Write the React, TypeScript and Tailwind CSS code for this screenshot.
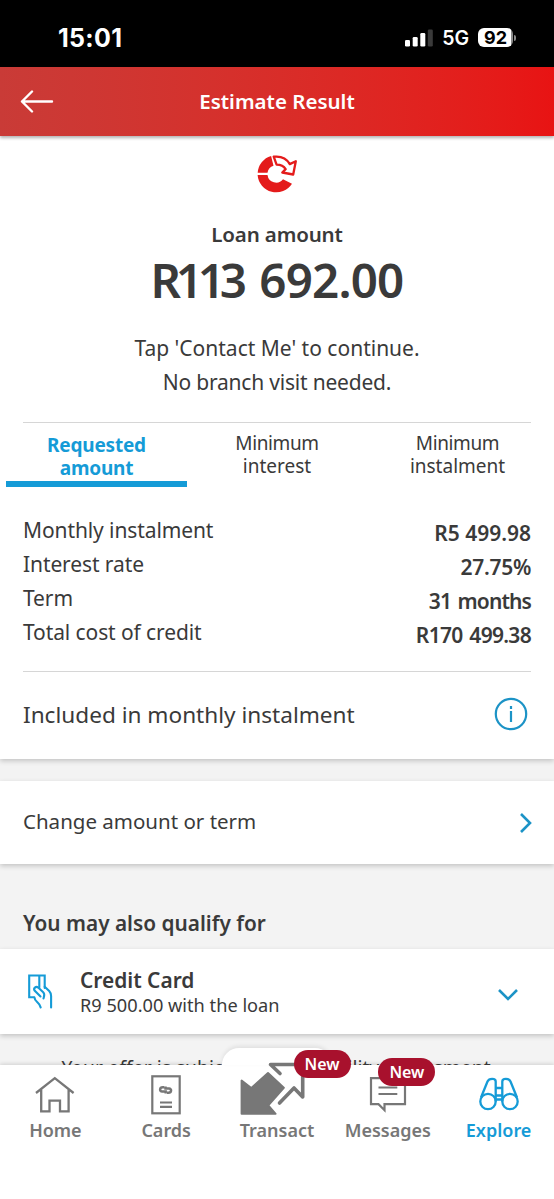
const details = [
  { label: 'Monthly instalment', value: 'R5 499.98', spacing: '' },
  { label: 'Interest rate', value: '27.75%', spacing: 'tracking-[-0.3px]' },
  { label: 'Term', value: '31 months', spacing: 'tracking-[-0.9px] [word-spacing:2px]' },
  { label: 'Total cost of credit', value: 'R170 499.38', spacing: 'tracking-[-0.7px] [word-spacing:2px]' },
];

const StatusBar = () => (
  <div className="flex h-[67px] items-center justify-between bg-black pr-[38px] pl-[58px] pt-2 font-['Inter',sans-serif] text-white">
    <span className="text-[25px] font-bold leading-8 tracking-[0.3px]">15:01</span>
    <div className="flex items-center">
      <svg width="28" height="18" viewBox="0 0 28 18" fill="white">
        <rect x="0" y="11" width="5" height="6.500" rx="1.3" />
        <rect x="7.7" y="8" width="5" height="9.500" rx="1.3" />
        <rect x="15.3" y="4" width="5" height="13.500" rx="1.3" />
        <rect x="22.8" y="0.5" width="5" height="17" rx="1.3" fill="#3a3a3a" />
      </svg>
      <span className="ml-[9px] text-[19.5px] font-semibold leading-6">5G</span>
      <span className="ml-[9px] flex h-[19px] w-[35px] items-center justify-center rounded-[6px] bg-linear-to-r from-white from-94% to-[#8a8a8a] to-94% text-[18px] font-bold leading-none text-black">
        92
      </span>
      <span className="ml-[1px] h-[6px] w-[2px] rounded-r bg-[#8a8a8a]" />
    </div>
  </div>
);

const LoanIcon = () => (
  <svg width="40" height="40" viewBox="0 0 40 40">
    <path d="M14.1 2 16.500 11.800A9 9 0 0 0 10.500 18.800H.7A18.500 18.500 0 0 1 14.100 2Z" fill="#e41b1b" />
    <path d="M.6 21h9.900a8.700 8.700 0 0 0 15.500 4.200l9 4.500A18.700 18.700 0 0 1 .6 21Z" fill="#e41b1b" />
    <path
      d="M16.700 2.700c7-.8 13 1.900 16.100 7.400l6-2.800-2.600 13.200-10.900-2 3.300-3.400c-1.700-2.900-4.500-4.500-9-4.500z"
      fill="none"
      stroke="#e41b1b"
      strokeWidth="2.300"
      strokeLinejoin="round"
    />
  </svg>
);

const HomeIcon = () => (
  <svg width="40" height="39" viewBox="0 0 40 39" fill="none" stroke="#777" strokeWidth="2.300">
    <path d="M1 17 19.800 2.200 38.600 17M6.200 13.500v21.800h8.300V24.700H25v10.600h8.600V13.500" />
  </svg>
);

const CardsIcon = () => (
  <svg width="30" height="40" viewBox="0 0 30 40" fill="none" stroke="#777" strokeWidth="2.200">
    <rect x="1.3" y="1.3" width="27.400" height="37" />
    <path d="M9 27.500h12M9 31.800h12" />
    <path
      d="M13.200 12.300h-1.400c-3.300 0-3.600 4.200-.6 4.300h3.500v2M16 17.800h1.400c3.300 0 3.600-4.200.6-4.300h-3.500v-2"
      strokeWidth="2.500"
    />
  </svg>
);

const TransactIcon = () => (
  <svg width="74" height="53" viewBox="0 0 74 53" fill="none" stroke="#777">
    <path d="M1.600 18.500v33.300h34l-7.300-8.500 15.500-17.500L28 11 11.300 26z" fill="#777" strokeWidth="2" strokeLinejoin="round" />
    <path d="M63 2.500H30.500l9.500 9M62.700 12v23L54 26 39.500 41" strokeWidth="3.600" strokeLinecap="round" strokeLinejoin="round" />
  </svg>
);

const MessagesIcon = () => (
  <svg width="38" height="38" viewBox="0 0 38 38" fill="none" stroke="#777" strokeWidth="2.200">
    <path d="M2 1.200h34v26H15.500v6l-6-6H2z" />
    <path d="M9.500 10.500h18.800M9.500 17h18.800" />
  </svg>
);

const ExploreIcon = () => (
  <svg width="40" height="38" viewBox="0 0 40 38" fill="none" stroke="#159bd7" strokeWidth="2.300">
    <circle cx="9" cy="24.500" r="7.700" />
    <circle cx="31" cy="24.500" r="7.700" />
    <path d="M2 20.500 8.500 4.500c1.500-3.500 8.200-3.500 8.200 0v20M38 20.500 31.500 4.500c-1.500-3.500-8.200-3.500-8.200 0v20M16.700 11h6.600M16.700 18.500h6.600M16.700 22.500h6.600" />
  </svg>
);

const CardHandIcon = () => (
  <svg width="25" height="35" viewBox="0 0 25 35" fill="none" stroke="#159bd7" strokeWidth="2.100" strokeLinecap="round">
    <path d="M6 23.300H1.200V1.500h15.500V14M11.300 1.500v12" />
    <path d="M6.500 23.500c0 4.500 5.500 5 6.200 10M12.500 22.500l-5.700-5.700c-2-2.500 1.200-5 3.400-3.200l5 4.700c2 1.800 1 3.700.3 6.200" />
    <path d="m16.700 12.700 4.500 4.300c1.400 1.500 1.900 2.500 1.900 5v11.500" />
  </svg>
);

const NewBadge = () => (
  <span className="flex h-[28px] w-[57px] items-center justify-center rounded-full bg-[#a8112d] text-[16px] font-semibold leading-5 text-white">
    New
  </span>
);

const App = () => {
  return (
    <div className="relative h-[1199px] w-[554px] overflow-hidden bg-[#f3f3f3] font-['Noto_Sans',sans-serif] text-[#3a3a3a]">
      <StatusBar />

      {/* Header */}
      <header className="relative flex h-[69px] items-center justify-center bg-linear-to-r from-[#c93b37] to-[#e81313] shadow-[0_2px_3px_rgba(0,0,0,0.3)]">
        <button className="absolute left-[20px]" aria-label="Back">
          <svg width="34" height="24" viewBox="0 0 34 24" fill="none" stroke="white" strokeWidth="2.400" strokeLinecap="round" strokeLinejoin="round">
            <path d="M32 11.500H2M12 1.500l-10 10 10 10" />
          </svg>
        </button>
        <h1 className="text-[20.5px] font-semibold text-white">Estimate Result</h1>
      </header>

      {/* Loan summary */}
      <section className="h-[623px] bg-white px-[23px] pt-[18px] shadow-[0_2px_5px_rgba(0,0,0,0.2)]">
        <div className="flex h-[269px] flex-col items-center border-b border-[#d6d6d6] whitespace-nowrap">
          <div className="h-[64px]">
            <LoanIcon />
          </div>
          <p className="h-[32px] text-[20.5px] font-semibold leading-[32px] tracking-[-0.15px]">Loan amount</p>
          <p className="h-[81px] text-[47.5px] font-semibold leading-[60px] tracking-[-0.8px]">
            <span className="tracking-[-5.2px]">R113</span>
            <span className="[word-spacing:6px]"> 692.00</span>
          </p>
          <p className="text-[21px] leading-[34px]">Tap 'Contact Me' to continue.</p>
          <p className="text-[21px] leading-[34px] tracking-[-0.2px]">No branch visit needed.</p>
        </div>

        {/* Tabs */}
        <div className="-mx-[17px] flex h-[64px] text-center text-[19px] leading-[23px]">
          <div className="w-[181px] border-b-[6px] border-[#159bd7] pt-[11px] font-bold tracking-[-0.2px] text-[#159bd7]">
            Requested
            <br />
            amount
          </div>
          <div className="w-[180px] pt-[9px]">
            <span className="tracking-[-0.4px]">Minimum</span>
            <br />
            interest
          </div>
          <div className="w-[181px] pt-[9px]">
            <span className="tracking-[-0.4px]">Minimum</span>
            <br />
            instalment
          </div>
        </div>

        <div className="h-[185px] border-b border-[#d6d6d6] pt-[26px]">
          {details.map((row) => (
            <div key={row.label} className="flex h-[34px] justify-between">
              <span className="text-[21px] leading-[34px] tracking-[-0.1px]">{row.label}</span>
              <span className={`pt-[3px] text-[21px] font-semibold leading-[34px] ${row.spacing}`}>{row.value}</span>
            </div>
          ))}
        </div>

        <div className="flex h-[86px] items-center justify-between pr-[3px]">
          <span className="text-[22.6px]">Included in monthly instalment</span>
          <svg className="mb-[2px]" width="34" height="34" viewBox="0 0 34 34" fill="none" stroke="#1c93c6" strokeWidth="2.200">
            <circle cx="17" cy="17" r="15.200" />
            <path d="M17 14v11M17 9v3" />
          </svg>
        </div>
      </section>

      {/* Change amount */}
      <section className="mt-[22px] flex h-[83px] items-center justify-between bg-white px-[22px] shadow-[0_2px_5px_rgba(0,0,0,0.2)]">
        <span className="pb-[3px] pl-px text-[20.5px]">Change amount or term</span>
        <svg width="13" height="20" viewBox="0 0 13 20" fill="none" stroke="#1c93c6" strokeWidth="2.600">
          <path d="m2 1 9 9-9 9" />
        </svg>
      </section>

      <h2 className="h-[85px] px-[23px] pt-[44px] text-[20.8px] font-semibold leading-[30px]">You may also qualify for</h2>

      {/* Credit card offer */}
      <section className="flex h-[85px] items-center bg-white pr-[36px] pl-[28px] shadow-[0_2px_5px_rgba(0,0,0,0.2)]">
        <CardHandIcon />
        <div className="ml-[27px] flex-1">
          <p className="text-[20.9px] font-semibold leading-[26px]">Credit Card</p>
          <p className="text-[18.2px] leading-[24px]">R9 500.00 with the loan</p>
        </div>
        <svg className="mt-[6px]" width="20" height="13" viewBox="0 0 20 13" fill="none" stroke="#1c93c6" strokeWidth="2.600">
          <path d="m1 2 9 9 9-9" />
        </svg>
      </section>
      <p className="mt-[21px] pr-[2px] text-center text-[19.3px] leading-[26px]">Your offer is subject to affordability assessment</p>

      {/* Bottom navigation */}
      <nav className="absolute inset-x-0 bottom-0 h-[134px] bg-white text-[18px] font-semibold text-[#777] shadow-[0_-1px_4px_rgba(0,0,0,0.15)]">
        <div className="absolute top-[-17px] left-[222px] h-[17px] w-[110px] rounded-t-[28px] bg-white shadow-[0_-2px_4px_rgba(0,0,0,0.08)]" />
        <div className="relative grid grid-cols-5 leading-[31px]">
          <div className="flex flex-col items-center">
            <div className="flex h-[50px] items-end"><HomeIcon /></div>
            <span>Home</span>
          </div>
          <div className="flex flex-col items-center">
            <div className="flex h-[50px] items-end"><CardsIcon /></div>
            <span>Cards</span>
          </div>
          <div className="relative flex flex-col items-center">
            <div className="flex h-[50px] items-end"><TransactIcon /></div>
            <span>Transact</span>
            <div className="absolute top-[-15px] left-[72px]"><NewBadge /></div>
          </div>
          <div className="relative flex flex-col items-center">
            <div className="flex h-[50px] items-end"><MessagesIcon /></div>
            <span>Messages</span>
            <div className="absolute top-[-7px] left-[46px]"><NewBadge /></div>
          </div>
          <div className="flex flex-col items-center text-[#159bd7]">
            <div className="flex h-[50px] items-end"><ExploreIcon /></div>
            <span>Explore</span>
          </div>
        </div>
      </nav>
    </div>
  );
};

export default App;
